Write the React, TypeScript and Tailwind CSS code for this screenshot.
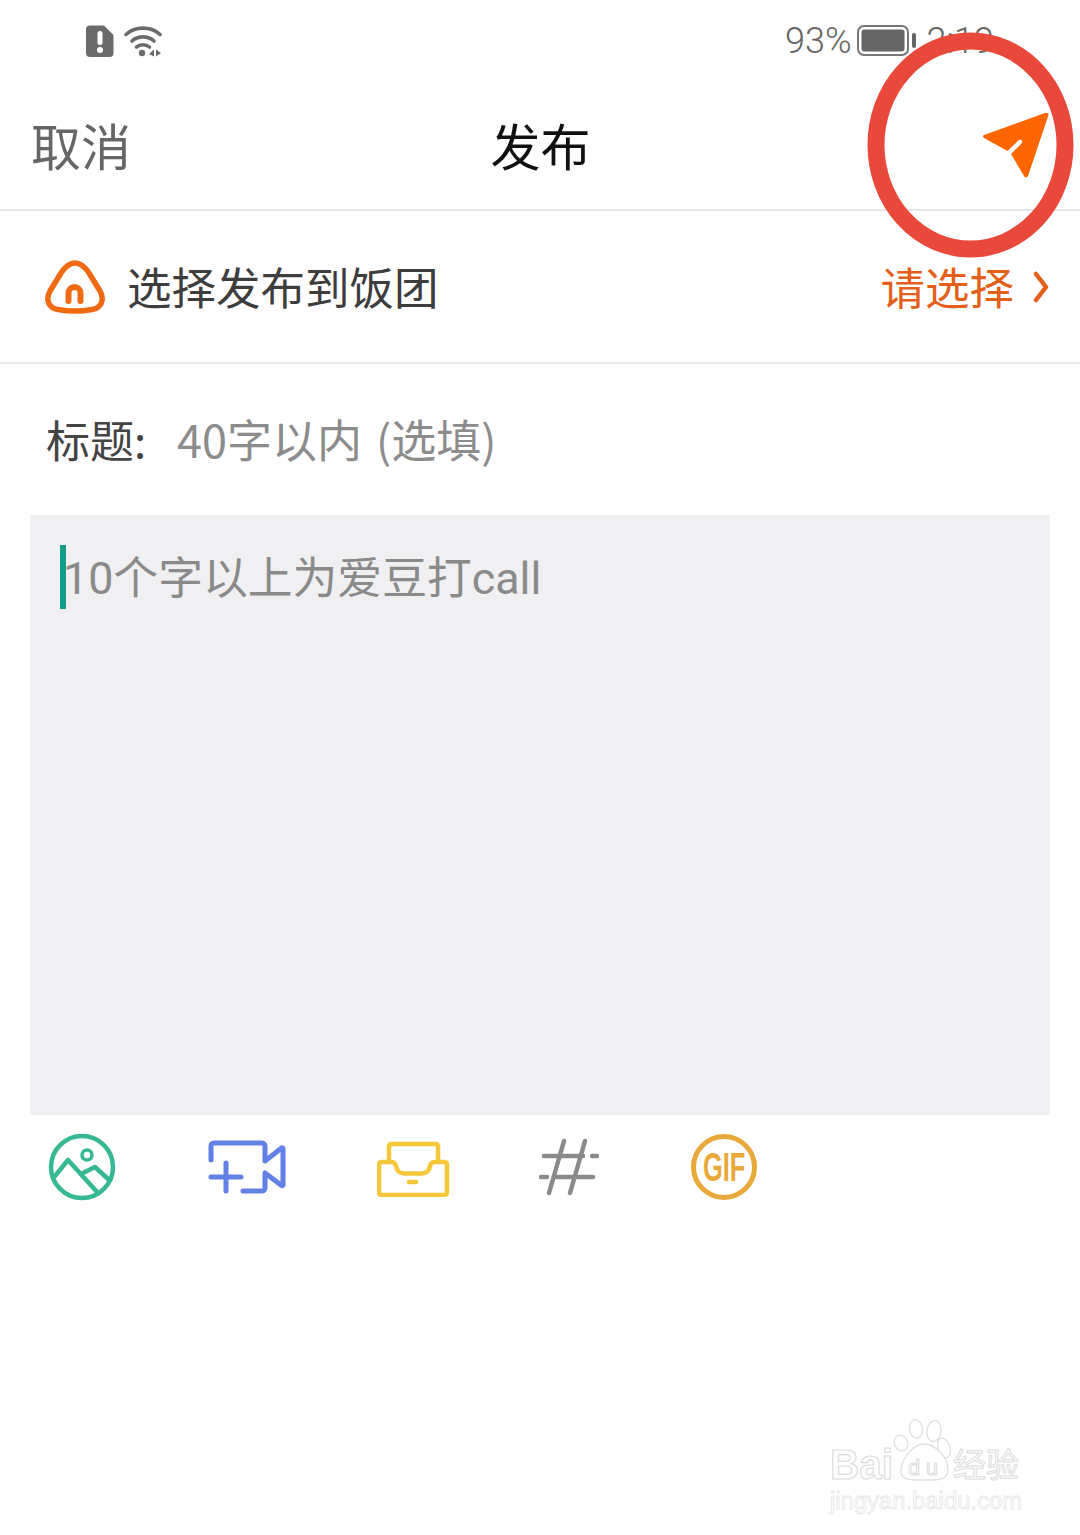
const cjk = "font-['Noto_Sans_CJK_SC','Noto_Sans',sans-serif]";

function SimAlertIcon() {
    return <svg width="30" height="34" viewBox="0 0 30 34">
        <path d="M5 1.500h14l9.500 9.500v18a4 4 0 0 1-4 4H5a4 4 0 0 1-4-4V5.500a4 4 0 0 1 4-4z" fill="#6b6b6b" />
        <rect x="12.500" y="7" width="5" height="14" rx="2.500" fill="#fff" />
        <circle cx="15" cy="26" r="3" fill="#fff" />
    </svg>;
}

function WifiIcon() {
    return <svg width="40" height="34" viewBox="0 0 40 34" fill="none">
        <path d="M2 10.500C11 2 27 2 36 10.500" stroke="#6b6b6b" strokeWidth="3.600" strokeLinecap="round" />
        <path d="M8 17C14 11.500 24 11.500 30 17" stroke="#6b6b6b" strokeWidth="3.600" strokeLinecap="round" />
        <path d="M12.500 23C16 20 22 20 25.500 23" stroke="#6b6b6b" strokeWidth="3.600" strokeLinecap="round" />
        <circle cx="18" cy="29" r="3.200" fill="#6b6b6b" />
        <path d="M30 25.500v7l-5-2.500zM32 25.500v7l5-3.500z" fill="#6b6b6b" />
    </svg>;
}

function BatteryIcon() {
    return <svg width="60" height="34" viewBox="0 0 60 34" fill="none">
        <rect x="1" y="2" width="50" height="29" rx="6" stroke="#777" strokeWidth="2" />
        <rect x="4.500" y="5.500" width="43" height="22" rx="3" fill="#666" />
        <rect x="55" y="9" width="4" height="15" rx="2" fill="#666" />
    </svg>;
}

function SendIcon() {
    return <svg width="68" height="68" viewBox="0 0 68 68">
        <path d="M65 2Q67 2 66.500 4L46 65Q44 68 42 65L29 43 40 32Q41 28 37 29L25.500 40 2 27Q0 25 2 24L63 2z" fill="#ff6600" />
    </svg>;
}

function RiceBallIcon() {
    return <svg width="60" height="54" viewBox="0 0 60 54" fill="none">
        <path d="M30 3C36 3 40 7 44 13L55 31C60 40 56 48 47 49.500C36 51.500 24 51.500 13 49.500C4 48 0 40 5 31L16 13C20 7 24 3 30 3z" stroke="#ef6a13" strokeWidth="5.500" />
        <path d="M23.500 41V33a6 6 0 0 1 12 0V41" stroke="#ef6a13" strokeWidth="6" strokeLinecap="round" />
    </svg>;
}

function PhotoIcon() {
    return <svg width="68" height="68" viewBox="0 0 68 68" fill="none" stroke="#36b894" strokeWidth="4.500" strokeLinecap="round" strokeLinejoin="round">
        <circle cx="34" cy="34" r="31" />
        <circle cx="39" cy="22" r="5" strokeWidth="3.500" />
        <path d="M7 43 20 27 50 60" />
        <path d="M33 41 47 34 60 46" />
    </svg>;
}

function VideoIcon() {
    return <svg width="78" height="54" viewBox="0 0 78 54" fill="none" stroke="#6280e6" strokeWidth="5" strokeLinecap="round" strokeLinejoin="round">
        <path d="M3 20V6a3 3 0 0 1 3-3H54a3 3 0 0 1 3 3V21L73 8.500a1 1 0 0 1 2 1V44a1 1 0 0 1-2 1L57 33V48a3 3 0 0 1-3 3H35" />
        <path d="M18 23V51M3 37H33" />
    </svg>;
}

function DraftIcon() {
    return <svg width="74" height="58" viewBox="0 0 74 58" fill="none" stroke="#f5c73b" strokeWidth="4.500" strokeLinecap="round" strokeLinejoin="round" className="translate-x-[1px] translate-y-[1px]">
        <path d="M12 23V7a2 2 0 0 1 2-2H59a2 2 0 0 1 2 2V23" />
        <path d="M5 23H14Q18 23 19 27Q20 34 27 34.500H45Q52 34 53 27Q54 23 58 23H67Q70 23 70 26V53Q70 56 67 56H5Q2 56 2 53V26Q2 23 5 23z" />
        <path d="M32 43H39" />
    </svg>;
}

function TopicIcon() {
    return <svg width="60" height="58" viewBox="0 0 60 58" fill="none" stroke="#8a8a8a" strokeWidth="4.500" strokeLinecap="round">
        <path d="M25 3 10 55M46 3 31 55" />
        <path d="M5 18H44M53 18H58M2 39H8M17 39H54" />
    </svg>;
}

function GifIcon() {
    return <div className="w-[66px] h-[66px] rounded-full border-[5px] border-[#e9a93a] flex items-center justify-center">
        <span className="shrink-0 font-['Liberation_Sans',sans-serif] font-bold text-[#e9a93a] text-[41px] leading-none scale-x-[0.62]">GIF</span>
    </div>;
}

function Watermark() {
    return <svg width="200" height="100" viewBox="0 0 200 100" fill="none" className="absolute right-[56px] bottom-[20px] overflow-visible">
        <g stroke="#e0e0e0" strokeWidth="1.300" fill="#fff">
            <ellipse cx="77" cy="28" rx="6.500" ry="8" transform="rotate(-25 77 28)" />
            <ellipse cx="92" cy="14" rx="6.500" ry="9.500" transform="rotate(-8 92 14)" />
            <ellipse cx="110" cy="16" rx="7" ry="10.500" transform="rotate(8 110 16)" />
            <ellipse cx="120" cy="33" rx="6" ry="10" transform="rotate(-18 120 33)" />
            <path d="M77 55C78 42 90 29 100 29C111 29 124 42 124 55C124 66 112 65 100 65C88 65 76 66 77 55z" />
        </g>
        <text x="6" y="64" fontSize="42" textLength="63" lengthAdjust="spacingAndGlyphs" stroke="#dcdcdc" strokeWidth="1.200" fill="#fff" fontFamily="Liberation Sans, sans-serif" fontWeight="700">Bai</text>
        <text x="84" y="60" fontSize="22" textLength="30" stroke="#dcdcdc" strokeWidth="1" fill="#fff" fontFamily="Liberation Sans, sans-serif">du</text>
        <text x="129" y="62" fontSize="33" stroke="#dcdcdc" strokeWidth="1" fill="#fff" fontFamily="Noto Sans CJK SC, sans-serif">经验</text>
        <text x="6" y="94" fontSize="23" stroke="#e6e6e6" strokeWidth="0.800" fill="#fff" fontFamily="Liberation Sans, sans-serif" textLength="192" lengthAdjust="spacingAndGlyphs">jingyan.baidu.com</text>
    </svg>;
}

export default function App() {
    return <div className={`relative w-[1080px] h-[1535px] bg-white overflow-hidden ${cjk}`}>
        {/* status bar */}
        <div className="h-[85px] flex items-center justify-between pl-[85px] pr-[86px] pb-[4px]">
            <div className="flex items-center gap-[9px]">
                <SimAlertIcon />
                <WifiIcon />
            </div>
            <div className="flex items-center gap-[5px] font-['Roboto',sans-serif] font-light text-[36px] text-[#666]">
                <span>93%</span>
                <BatteryIcon />
                <span className="ml-[5px]">2:19</span>
            </div>
        </div>

        {/* header */}
        <div className="h-[126px] border-b-2 border-[#e6e6e6] flex items-center justify-between pl-[31px] pr-[30px] pb-[7px]">
            <span className="text-[50px] leading-none text-[#666] w-[200px]">取消</span>
            <span className="text-[50px] leading-none text-[#111]">发布</span>
            <div className="w-[200px] flex justify-end pt-[2px]">
                <SendIcon />
            </div>
        </div>

        {/* group picker */}
        <div className="h-[153px] border-b-2 border-[#e9e9e9] flex items-center justify-between pl-[45px] pr-[30px]">
            <div className="flex items-center gap-[22px]">
                <RiceBallIcon />
                <span className="text-[44.500px] leading-none text-[#3d3d3d]">选择发布到饭团</span>
            </div>
            <div className="flex items-center gap-[18px]">
                <span className="text-[44.500px] leading-none text-[#e4601a]">请选择</span>
                <svg width="18" height="32" viewBox="0 0 18 32" fill="none">
                    <path d="M4 3 14 16 4 29" stroke="#e4601a" strokeWidth="4.500" strokeLinecap="round" strokeLinejoin="round" />
                </svg>
            </div>
        </div>

        {/* title */}
        <div className="h-[151px] pl-[46px] flex items-center pb-[2px] text-[44px] leading-none">
            <span className="text-[#444] w-[131px]">标题:</span>
            <span className="text-[45px] [word-spacing:4px] text-[#8c8c8c]">40字以内 (选填)</span>
        </div>

        {/* content box */}
        <div className="relative mx-[30px] h-[600px] bg-[#f0f0f2] pl-[33px] pt-[38px]">
            <div className="absolute left-[30px] top-[30px] w-[6px] h-[64px] bg-[#129b86]" />
            <span className="text-[44.800px] leading-[52px] text-[#8a8a8a] font-['Roboto','Noto_Sans_CJK_SC',sans-serif]">10个字以上为爱豆打call</span>
        </div>

        {/* toolbar */}
        <div className="flex items-center h-[104px] pl-[48px] text-[0px]">
            <div className="w-[160px]"><PhotoIcon /></div>
            <div className="w-[168px]"><VideoIcon /></div>
            <div className="w-[163px]"><DraftIcon /></div>
            <div className="w-[152px]"><TopicIcon /></div>
            <GifIcon />
        </div>

        <Watermark />

        {/* red annotation ring */}
        <svg width="210" height="232" viewBox="0 0 210 232" fill="none" className="absolute left-[866px] top-[31px]">
            <ellipse cx="104.500" cy="114" rx="94.500" ry="104" stroke="#e8493a" strokeWidth="17" />
        </svg>
    </div>;
}
